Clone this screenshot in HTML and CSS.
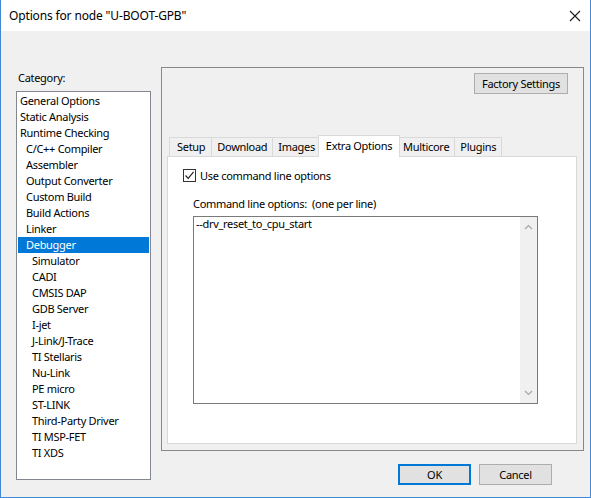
FILE: index.html
```html
<!DOCTYPE html>
<html lang="en">

<head>
    <meta charset="UTF-8">
    <title>Options for node "U-BOOT-GPB"</title>
    <link rel="stylesheet" href="styles.css">
</head>

<body>

    <div class="window">
        <!-- Title bar -->
        <div class="titlebar">
            <span class="title">Options for node "U-BOOT-GPB"</span>
            <svg class="close" width="12" height="12" viewBox="0 0 12 12">
                <path d="M1 1 L11 11 M11 1 L1 11" stroke="#1a1a1a" stroke-width="1.1" fill="none" />
            </svg>
        </div>

        <div class="main">
            <!-- Category tree -->
            <div class="category">
                <div class="category-label">Category:</div>
                <ul class="category-list">
                    <li class="lvl0">General Options</li>
                    <li class="lvl0">Static Analysis</li>
                    <li class="lvl0">Runtime Checking</li>
                    <li class="lvl1">C/C++ Compiler</li>
                    <li class="lvl1">Assembler</li>
                    <li class="lvl1">Output Converter</li>
                    <li class="lvl1">Custom Build</li>
                    <li class="lvl1">Build Actions</li>
                    <li class="lvl1">Linker</li>
                    <li class="lvl1 selected">Debugger</li>
                    <li class="lvl2">Simulator</li>
                    <li class="lvl2">CADI</li>
                    <li class="lvl2">CMSIS DAP</li>
                    <li class="lvl2">GDB Server</li>
                    <li class="lvl2">I-jet</li>
                    <li class="lvl2">J-Link/J-Trace</li>
                    <li class="lvl2">TI Stellaris</li>
                    <li class="lvl2">Nu-Link</li>
                    <li class="lvl2">PE micro</li>
                    <li class="lvl2">ST-LINK</li>
                    <li class="lvl2">Third-Party Driver</li>
                    <li class="lvl2">TI MSP-FET</li>
                    <li class="lvl2">TI XDS</li>
                </ul>
            </div>

            <div class="side">
                <!-- Options page -->
                <div class="group">
                    <div class="group-top">
                        <button class="btn btn-factory">Factory Settings</button>
                    </div>

                    <div class="tab-strip">
                        <div class="tab">Setup</div>
                        <div class="tab">Download</div>
                        <div class="tab">Images</div>
                        <div class="tab active">Extra Options</div>
                        <div class="tab">Multicore</div>
                        <div class="tab">Plugins</div>
                    </div>

                    <div class="tab-pane">
                        <label class="check-row">
                            <span class="checkbox">
                                <svg width="11" height="11" viewBox="0 0 11 11">
                                    <path d="M1.5 5.5 L4.2 8.3 L9.6 1.8" stroke="#222" stroke-width="1.2" fill="none" />
                                </svg>
                            </span>
                            Use command line options
                        </label>

                        <div class="field-label">Command line options:&nbsp; (one per line)</div>
                        <div class="textbox">
                            <div class="textbox-text">--drv_reset_to_cpu_start</div>
                            <div class="scrollbar">
                                <svg width="9" height="6" viewBox="0 0 9 6">
                                    <path d="M1 5 L4.5 1.5 L8 5" stroke="#a6a6a6" stroke-width="1.2" fill="none" />
                                </svg>
                                <svg width="9" height="6" viewBox="0 0 9 6">
                                    <path d="M1 1 L4.5 4.5 L8 1" stroke="#a6a6a6" stroke-width="1.2" fill="none" />
                                </svg>
                            </div>
                        </div>
                    </div>
                </div>

                <div class="footer">
                    <button class="btn btn-default">OK</button>
                    <button class="btn">Cancel</button>
                </div>
            </div>
        </div>
    </div>

</body>

</html>
```

FILE: styles.css
```css
* {
    padding: 0;
    margin: 0;
    box-sizing: border-box;
    font-family: "Noto Sans", sans-serif;
}

body {
    width: 591px;
    height: 498px;
    font-size: 11px;
    letter-spacing: -0.3px;
    color: #000;
}

.window {
    width: 591px;
    height: 498px;
    border: 1px solid #3f8ad3;
    border-top: none;
    background-color: #f0f0f0;
    display: flex;
    flex-direction: column;
}

.titlebar {
    flex-shrink: 0;
    height: 31px;
    background-color: #fff;
    display: flex;
    align-items: center;
    justify-content: space-between;
    padding: 0 9px 0 8px;
}

.title {
    font-size: 12px;
    letter-spacing: -0.15px;
}

.main {
    display: flex;
    gap: 10px;
    padding: 36px 0 0 15px;
}

.category {
    width: 135px;
    padding-top: 3px;
}

.category-label {
    height: 16px;
    line-height: 16px;
    padding-left: 2px;
    margin-bottom: 5px;
}

.category-list {
    list-style: none;
    height: 389px;
    background-color: #fff;
    border: 1px solid #828790;
    padding: 1px;
}

.category-list li {
    height: 16px;
    line-height: 16px;
    white-space: nowrap;
}

.lvl0 {
    padding-left: 2px;
}

.lvl1 {
    padding-left: 8px;
}

.lvl2 {
    padding-left: 14px;
}

.category-list li.selected {
    background-color: #0078d7;
    color: #fff;
}

.side {
    display: flex;
    flex-direction: column;
}

.group {
    width: 423px;
    height: 384px;
    border: 1px solid #888;
    display: flex;
    flex-direction: column;
    padding: 5px 6px 6px 5px;
}

.group-top {
    display: flex;
    justify-content: flex-end;
    padding-right: 9px;
    height: 62px;
}

.btn {
    height: 21px;
    width: 73px;
    font-size: 11px;
    letter-spacing: -0.3px;
    background-color: #e1e1e1;
    border: 1px solid #adadad;
    color: #000;
}

.btn-factory {
    width: 94px;
}

.btn-default {
    border-color: #0078d7;
    box-shadow: inset 0 0 0 1px #0078d7;
}

.tab-strip {
    display: flex;
    align-items: flex-end;
    height: 21px;
    padding-left: 2px;
}

.tab {
    height: 19px;
    line-height: 18px;
    padding: 0 5px;
    border: 1px solid #d9d9d9;
    border-bottom: none;
    border-right: none;
    background-color: #f0f0f0;
    white-space: nowrap;
}

.tab:first-child {
    padding: 0 6px 0 7px;
}

.tab:last-child {
    border-right: 1px solid #d9d9d9;
}

.tab.active {
    height: 22px;
    line-height: 20px;
    margin: 0 -2px -1px;
    padding: 0 7px;
    border-right: 1px solid #d9d9d9;
    background-color: #fff;
    position: relative;
}

.tab.active + .tab {
    border-left: none;
}

.tab-pane {
    flex: 1;
    background-color: #fff;
    border: 1px solid #d9d9d9;
    padding: 12px 0 0 15px;
}

.check-row {
    display: flex;
    align-items: center;
    gap: 4px;
    height: 13px;
}

.checkbox {
    width: 13px;
    height: 13px;
    border: 1px solid #333;
    background-color: #fff;
    display: flex;
}

.field-label {
    margin: 14px 0 0 10px;
    height: 16px;
    line-height: 16px;
}

.textbox {
    margin: 4px 0 0 10px;
    width: 345px;
    height: 188px;
    border: 1px solid #7a7a7a;
    display: flex;
    justify-content: space-between;
}

.textbox-text {
    padding: 0 0 0 2px;
    line-height: 14px;
}

.scrollbar {
    width: 17px;
    background-color: #f0f0f0;
    display: flex;
    flex-direction: column;
    justify-content: space-between;
    align-items: center;
    padding: 7px 0 7px;
}

.footer {
    display: flex;
    justify-content: flex-end;
    gap: 8px;
    padding: 13px 32px 0 0;
}
```
